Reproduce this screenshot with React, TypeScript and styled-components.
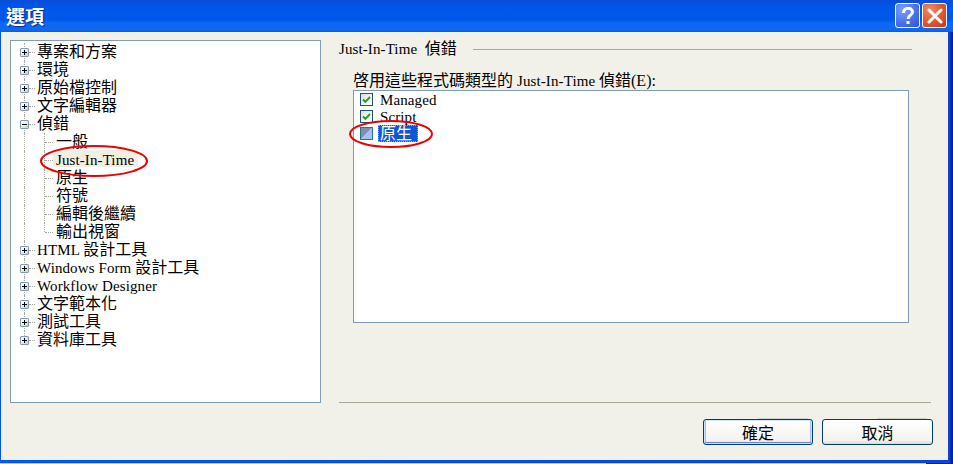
import React from 'react';
import styled, { createGlobalStyle } from 'styled-components';

const GlobalStyle = createGlobalStyle`
  html, body {
    margin: 0;
    padding: 0;
    background: #fff;
  }
`;

const fontStack = `"Liberation Serif", "Noto Sans CJK TC", serif`;

const Window = styled.div`
  width: 953px;
  height: 464px;
  box-sizing: border-box;
  display: flex;
  flex-direction: column;
  position: relative;
  overflow: hidden;
  background: #0831d9;
  font-family: ${fontStack};
  font-size: 16px;
  color: #000;
`;

const TitleBar = styled.div`
  height: 32px;
  flex: none;
  display: flex;
  align-items: center;
  justify-content: space-between;
  padding: 0 6px 1px 6px;
  box-sizing: border-box;
  background: linear-gradient(
    180deg,
    #0a4cd4 0,
    #0052e4 3px,
    #0058ea 12px,
    #0058ea 20px,
    #0f68f2 23px,
    #0f68f2 30px,
    #0a5ae0 32px
  );
`;

const Title = styled.div`
  font-size: 19px;
  font-weight: 700;
  color: #fff;
  text-shadow: 1px 1px 1px #0a2a90;
  font-family: "Noto Sans CJK TC", sans-serif;
`;

const TitleButtons = styled.div`
  display: flex;
  gap: 2px;
`;

const CaptionButton = styled.div<{ $close?: boolean }>`
  width: 25px;
  height: 25px;
  box-sizing: border-box;
  border: 1px solid #fff;
  border-radius: 3px;
  display: flex;
  align-items: center;
  justify-content: center;
  background: ${(p) =>
    p.$close
      ? 'radial-gradient(circle at 30% 25%, #ec8a68 0, #e0562f 55%, #c23a16 100%)'
      : 'radial-gradient(circle at 30% 25%, #7f9ff2 0, #4a72e8 55%, #2d50d0 100%)'};
`;

const Frame = styled.div`
  flex: 1;
  min-height: 0;
  display: flex;
  padding: 0 5px 3px 1px;
  background: linear-gradient(90deg, #0055f0 0, #0055f0 1px, #0a46d8 948px, #0a40d0 950px, #0020a0 951px);
  position: relative;
`;

const Body = styled.div`
  flex: 1;
  display: flex;
  gap: 18px;
  padding: 8px 0 0 9px;
  background: #f2f1e9;
`;

const BottomEdge = styled.div`
  height: 1px;
  flex: none;
  background: linear-gradient(90deg, #c8d0e8 0, #c8d0e8 926px, #001c90 926px);
`;

const TreePanel = styled.div`
  width: 311px;
  height: 363px;
  flex: none;
  box-sizing: border-box;
  border: 1px solid #7f9db9;
  background: #fff;
  padding: 2px 0 0 0;
`;

const TreeRow = styled.div`
  position: relative;
  height: 18px;
  display: flex;
  align-items: flex-start;
  padding-left: 25px;
  white-space: nowrap;
`;

const Trunk = styled.span<{ $half?: boolean }>`
  position: absolute;
  left: 13px;
  top: 0;
  height: ${(p) => (p.$half ? '9px' : '18px')};
  border-left: 1px dotted #a9a9a0;
`;

const Stub = styled.span`
  position: absolute;
  left: 18px;
  top: 9px;
  width: 6px;
  border-top: 1px dotted #a9a9a0;
`;

const Expander = styled.span`
  position: absolute;
  left: 9px;
  top: 5px;
  width: 9px;
  height: 9px;
  box-sizing: border-box;
  border: 1px solid #7f9db9;
  border-radius: 1px;
  background: linear-gradient(135deg, #fff 20%, #d8d4c4 85%);
`;

const ChildTrunk = styled.span<{ $half?: boolean }>`
  position: absolute;
  left: 33px;
  top: 0;
  height: ${(p) => (p.$half ? '9px' : '18px')};
  border-left: 1px dotted #a9a9a0;
`;

const ChildStub = styled.span`
  position: absolute;
  left: 34px;
  top: 9px;
  width: 8px;
  border-top: 1px dotted #a9a9a0;
`;

const NodeLabel = styled.span<{ $child?: boolean; $active?: boolean }>`
  margin: -1px 0 0 ${(p) => (p.$child ? '17px' : '0')};
  padding: 0 4px 0 ${(p) => (p.$child ? '3px' : '1px')};
  height: 17px;
  line-height: 19px;
  background: ${(p) => (p.$active ? '#f1efe2' : 'transparent')};
`;

const Latin = styled.span`
  font-size: 15px;
  letter-spacing: 0.1px;
`;

const RightColumn = styled.div`
  flex: 1;
  display: flex;
  flex-direction: column;
  min-width: 0;
`;

const GroupHeader = styled.div`
  display: flex;
  align-items: center;
  height: 18px;
  margin-right: 36px;
  white-space: pre;
  line-height: 16px;
`;

const HeaderRule = styled.div`
  flex: 1;
  height: 1px;
  margin-left: 16px;
  background: #aca899;
`;

const FieldLabel = styled.div`
  margin: 13px 0 0 14px;
  height: 18px;
  line-height: 20px;
  white-space: nowrap;
`;

const ListBox = styled.div`
  margin: 1px 0 0 14px;
  width: 556px;
  height: 233px;
  box-sizing: border-box;
  border: 1px solid #7f9db9;
  background: #fff;
  padding: 0 0 0 6px;
`;

const ListRow = styled.div`
  height: 17px;
  display: flex;
  align-items: center;
  gap: 5px;
`;

const CheckBox = styled.span<{ $dim?: boolean }>`
  width: 13px;
  height: 13px;
  flex: none;
  box-sizing: border-box;
  border: 1px solid ${(p) => (p.$dim ? '#1c7a80' : '#1c5180')};
  background: ${(p) =>
    p.$dim
      ? 'linear-gradient(135deg, #7d8fb8 50%, #a9c0ea 50%)'
      : 'linear-gradient(135deg, #dcdcd7 0, #fff 80%)'};
  display: flex;
  align-items: center;
  justify-content: center;
`;

const ListText = styled.span<{ $selected?: boolean }>`
  height: 17px;
  line-height: 18px;
  padding: 0 3px 0 2px;
  min-width: 40px;
  box-sizing: border-box;
  color: ${(p) => (p.$selected ? '#fff' : '#000')};
  background: ${(p) => (p.$selected ? '#1256d8' : 'transparent')};
  outline: ${(p) => (p.$selected ? '1px dotted #f0a030' : 'none')};
  outline-offset: -1px;
`;

const Divider = styled.div`
  margin-top: 79px;
  margin-right: 17px;
  height: 1px;
  background: #aca899;
`;

const Footer = styled.div`
  display: flex;
  justify-content: flex-end;
  gap: 9px;
  margin: 16px 15px 0 0;
`;

const DialogButton = styled.button<{ $default?: boolean }>`
  position: relative;
  width: ${(p) => (p.$default ? '110px' : '111px')};
  height: 26px;
  padding: 0 0 2px;
  box-sizing: border-box;
  border: 1px solid #003c74;
  border-radius: 3px;
  font: inherit;
  color: #000;
  background: linear-gradient(180deg, #fff 0, #f4f3ee 85%, #dcd8cb 100%);
  box-shadow: ${(p) =>
    p.$default
      ? 'inset 0 0 0 1px #cee7ff, inset 0 -1px 0 1px #6982ee, inset 2px 0 0 0 #a8c0f0, inset -2px 0 0 0 #a8c0f0'
      : 'none'};

  &::before {
    content: '';
    position: absolute;
    top: -2px;
    left: 54px;
    width: 50px;
    height: 1px;
    background: #d4d1c6;
  }
`;

const Annotation = styled.svg`
  position: absolute;
  left: 0;
  top: 0;
  pointer-events: none;
`;

const topNodes = ['專案和方案', '環境', '原始檔控制', '文字編輯器'];
const debugChildren: React.ReactNode[] = ['一般', <Latin key="jit">Just-In-Time</Latin>, '原生', '符號', '編輯後繼續', '輸出視窗'];
const lowerNodes: React.ReactNode[] = [
  <><Latin>HTML </Latin>設計工具</>,
  <><Latin>Windows Form </Latin>設計工具</>,
  <Latin>Workflow Designer</Latin>,
  '文字範本化',
  '測試工具',
  '資料庫工具',
];

const Plus = () => (
  <svg width="7" height="7" viewBox="0 0 7 7" style={{ display: 'block' }}>
    <path d="M1 3.500h5M3.500 1v5" stroke="#000" strokeWidth="1" />
  </svg>
);

const Minus = () => (
  <svg width="7" height="7" viewBox="0 0 7 7" style={{ display: 'block' }}>
    <path d="M1 3.500h5" stroke="#000" strokeWidth="1" />
  </svg>
);

const Tick = () => (
  <svg width="11" height="11" viewBox="0 0 11 11" style={{ display: 'block' }}>
    <path d="M2 5.500l2.400 2.400L9 3" fill="none" stroke="#21a121" strokeWidth="2" />
  </svg>
);

const ParentRow = ({ label, open, last }: { label: React.ReactNode; open?: boolean; last?: boolean }) => (
  <TreeRow>
    <Trunk $half={last} />
    <Stub />
    <Expander>{open ? <Minus /> : <Plus />}</Expander>
    <NodeLabel>{label}</NodeLabel>
  </TreeRow>
);

export default function App() {
  return (
    <Window>
      <GlobalStyle />
      <TitleBar>
        <Title>選項</Title>
        <TitleButtons>
          <CaptionButton>
            <svg width="14" height="18" viewBox="0 0 14 18">
              <path d="M2.500 6c0-6 9-6 9-1 0 3-4.500 3.500-4.500 7" fill="none" stroke="#fff" strokeWidth="3" />
              <rect x="5.500" y="14" width="3" height="3" fill="#fff" />
            </svg>
          </CaptionButton>
          <CaptionButton $close>
            <svg width="16" height="16" viewBox="0 0 16 16">
              <path d="M2 2l12 12M14 2L2 14" stroke="#fff" strokeWidth="3" strokeLinecap="round" />
            </svg>
          </CaptionButton>
        </TitleButtons>
      </TitleBar>
      <Frame>
        <Body>
          <TreePanel>
            {topNodes.map((n) => (
              <ParentRow key={n} label={n} />
            ))}
            <ParentRow label="偵錯" open />
            {debugChildren.map((c, i) => (
              <TreeRow key={i}>
                <Trunk />
                <ChildTrunk $half={i === debugChildren.length - 1} />
                <ChildStub />
                <NodeLabel $child $active={i === 1}>{c}</NodeLabel>
              </TreeRow>
            ))}
            {lowerNodes.map((n, i) => (
              <ParentRow key={i} label={n} last={i === lowerNodes.length - 1} />
            ))}
          </TreePanel>
          <RightColumn>
            <GroupHeader>
              <Latin>Just-In-Time{'  '}</Latin>偵錯
              <HeaderRule />
            </GroupHeader>
            <FieldLabel>
              啓用這些程式碼類型的 <Latin>Just-In-Time </Latin>偵錯(E):
            </FieldLabel>
            <ListBox>
              <ListRow>
                <CheckBox><Tick /></CheckBox>
                <ListText><Latin>Managed</Latin></ListText>
              </ListRow>
              <ListRow>
                <CheckBox><Tick /></CheckBox>
                <ListText><Latin>Script</Latin></ListText>
              </ListRow>
              <ListRow>
                <CheckBox $dim />
                <ListText $selected>原生</ListText>
              </ListRow>
            </ListBox>
            <Divider />
            <Footer>
              <DialogButton $default>確定</DialogButton>
              <DialogButton>取消</DialogButton>
            </Footer>
          </RightColumn>
        </Body>
      </Frame>
      <BottomEdge />
      <Annotation width="953" height="464">
        <ellipse cx="94" cy="161" rx="53" ry="15" fill="none" stroke="#ee0000" strokeWidth="2" />
        <ellipse cx="391" cy="134" rx="41" ry="13" fill="none" stroke="#ee0000" strokeWidth="2" />
      </Annotation>
    </Window>
  );
}
